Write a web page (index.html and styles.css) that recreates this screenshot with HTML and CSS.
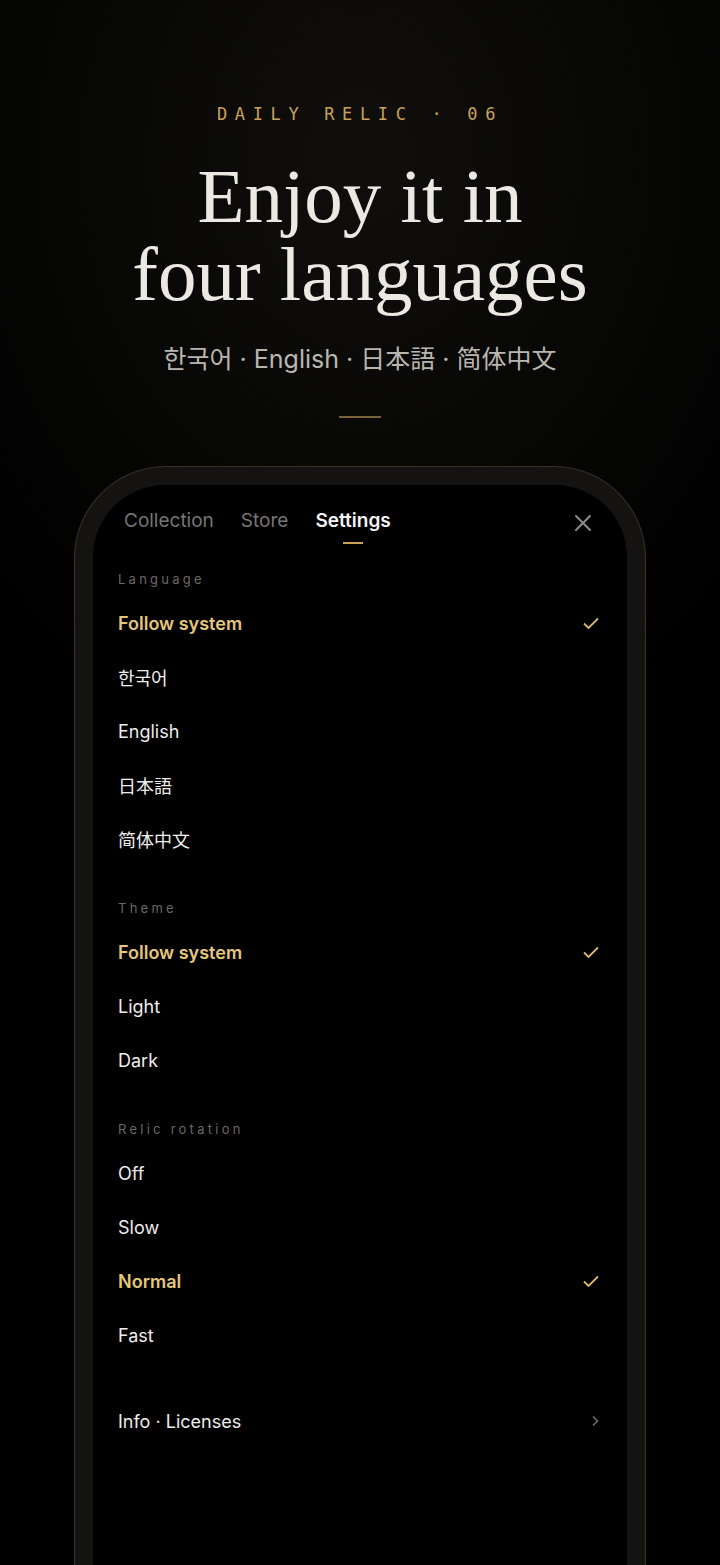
FILE: index.html
```html
<!DOCTYPE html>
<html lang="en">
<head>
    <meta charset="UTF-8">
    <meta name="viewport" content="width=device-width, initial-scale=1.0">
    <title>Daily Relic - Languages</title>
    <link rel="stylesheet" href="styles.css">
</head>
<body>
    <div class="hero">
        <div class="eyebrow">DAILY RELIC · 06</div>
        <h1>Enjoy it in<br>four languages</h1>
        <p class="subtitle">한국어 · English · 日本語 · 简体中文</p>
        <div class="divider"></div>
    </div>

    <div class="phone">
        <div class="screen">
            <div class="tabs">
                <span class="tab">Collection</span>
                <span class="tab">Store</span>
                <span class="tab active">Settings</span>
                <svg class="close" width="18" height="18" viewBox="0 0 18 18">
                    <path d="M2 2 L16 16 M16 2 L2 16" stroke="#8b8b8b" stroke-width="2" stroke-linecap="round" fill="none"/>
                </svg>
            </div>

            <div class="section">
                <div class="section-label">Language</div>
                <div class="row selected">Follow system
                    <svg class="check" width="16" height="14" viewBox="0 0 16 14"><path d="M1 7.5 L5.5 12 L15 2.5" stroke="#d9b96b" stroke-width="1.8" fill="none"/></svg>
                </div>
                <div class="row">한국어</div>
                <div class="row">English</div>
                <div class="row">日本語</div>
                <div class="row">简体中文</div>
            </div>

            <div class="section">
                <div class="section-label">Theme</div>
                <div class="row selected">Follow system
                    <svg class="check" width="16" height="14" viewBox="0 0 16 14"><path d="M1 7.5 L5.5 12 L15 2.5" stroke="#d9b96b" stroke-width="1.8" fill="none"/></svg>
                </div>
                <div class="row">Light</div>
                <div class="row">Dark</div>
            </div>

            <div class="section">
                <div class="section-label">Relic rotation</div>
                <div class="row">Off</div>
                <div class="row">Slow</div>
                <div class="row selected">Normal
                    <svg class="check" width="16" height="14" viewBox="0 0 16 14"><path d="M1 7.5 L5.5 12 L15 2.5" stroke="#d9b96b" stroke-width="1.8" fill="none"/></svg>
                </div>
                <div class="row">Fast</div>
            </div>

            <div class="section">
                <div class="row">Info · Licenses
                    <svg class="chevron" width="10" height="14" viewBox="0 0 10 14"><path d="M3 2.5 L7.5 7 L3 11.5" stroke="#6b6b6b" stroke-width="1.6" fill="none"/></svg>
                </div>
            </div>
        </div>
    </div>
</body>
</html>
```

FILE: styles.css
```css
body {
    margin: 0;
    padding: 0;
    height: 1565px;
    overflow: hidden;
    background-color: #000;
    background-image: radial-gradient(ellipse 70% 40% at 50% 10%, #100f0d 0%, #060605 60%, #000 100%);
    font-family: Inter, "Noto Sans CJK KR", sans-serif;
    color: #ececec;
}
.hero {
    padding-top: 102px;
    text-align: center;
}
.eyebrow {
    font-family: "DejaVu Sans Mono", monospace;
    font-size: 17px;
    line-height: 24px;
    letter-spacing: 0.45em;
    color: #c9a157;
}
h1 {
    margin: 31px 0 0;
    font-family: "Liberation Serif", serif;
    font-weight: normal;
    font-size: 77px;
    line-height: 78px;
    color: #ece9e3;
}
.subtitle {
    margin: 30px 0 0;
    font-family: Inter, "Noto Sans CJK KR", "Noto Sans CJK JP", "Noto Sans CJK SC", sans-serif;
    font-size: 25px;
    line-height: 32px;
    color: #b9b6b0;
}
.divider {
    width: 42px;
    height: 2px;
    margin: 41px auto 0;
    background-color: #7a6238;
}
.phone {
    width: 534px;
    height: 1100px;
    margin: 48px auto 0;
    padding: 18px 18px 0;
    border: 1px solid #3a3221;
    border-bottom: none;
    border-radius: 92px 92px 0 0;
    background-color: #141312;
}
.screen {
    height: 100%;
    background-color: #000;
    border-radius: 72px 72px 0 0;
    padding: 0 27px 0 25px;
}
.tabs {
    display: flex;
    align-items: flex-start;
    gap: 27px;
    padding: 24px 8px 0 6px;
    height: 60px;
}
.tab {
    position: relative;
    font-size: 19px;
    line-height: 24px;
    color: #777674;
}
.tab.active {
    color: #f4f4f4;
    font-weight: 600;
}
.tab.active::after {
    content: "";
    position: absolute;
    left: 50%;
    top: 33px;
    width: 20px;
    height: 2px;
    margin-left: -10px;
    background-color: #c9a157;
}
.close {
    margin-left: auto;
    margin-top: 5px;
}
.section {
    margin-bottom: 32px;
}
.section-label {
    font-size: 13px;
    line-height: 20px;
    letter-spacing: 0.25em;
    color: #6a6966;
    margin-bottom: 7px;
}
.row {
    display: flex;
    align-items: center;
    justify-content: space-between;
    height: 54px;
    font-size: 18px;
    color: #ececec;
}
.row.selected {
    color: #e5c67b;
    font-weight: 600;
}
.check {
    margin-right: 1px;
}
```
